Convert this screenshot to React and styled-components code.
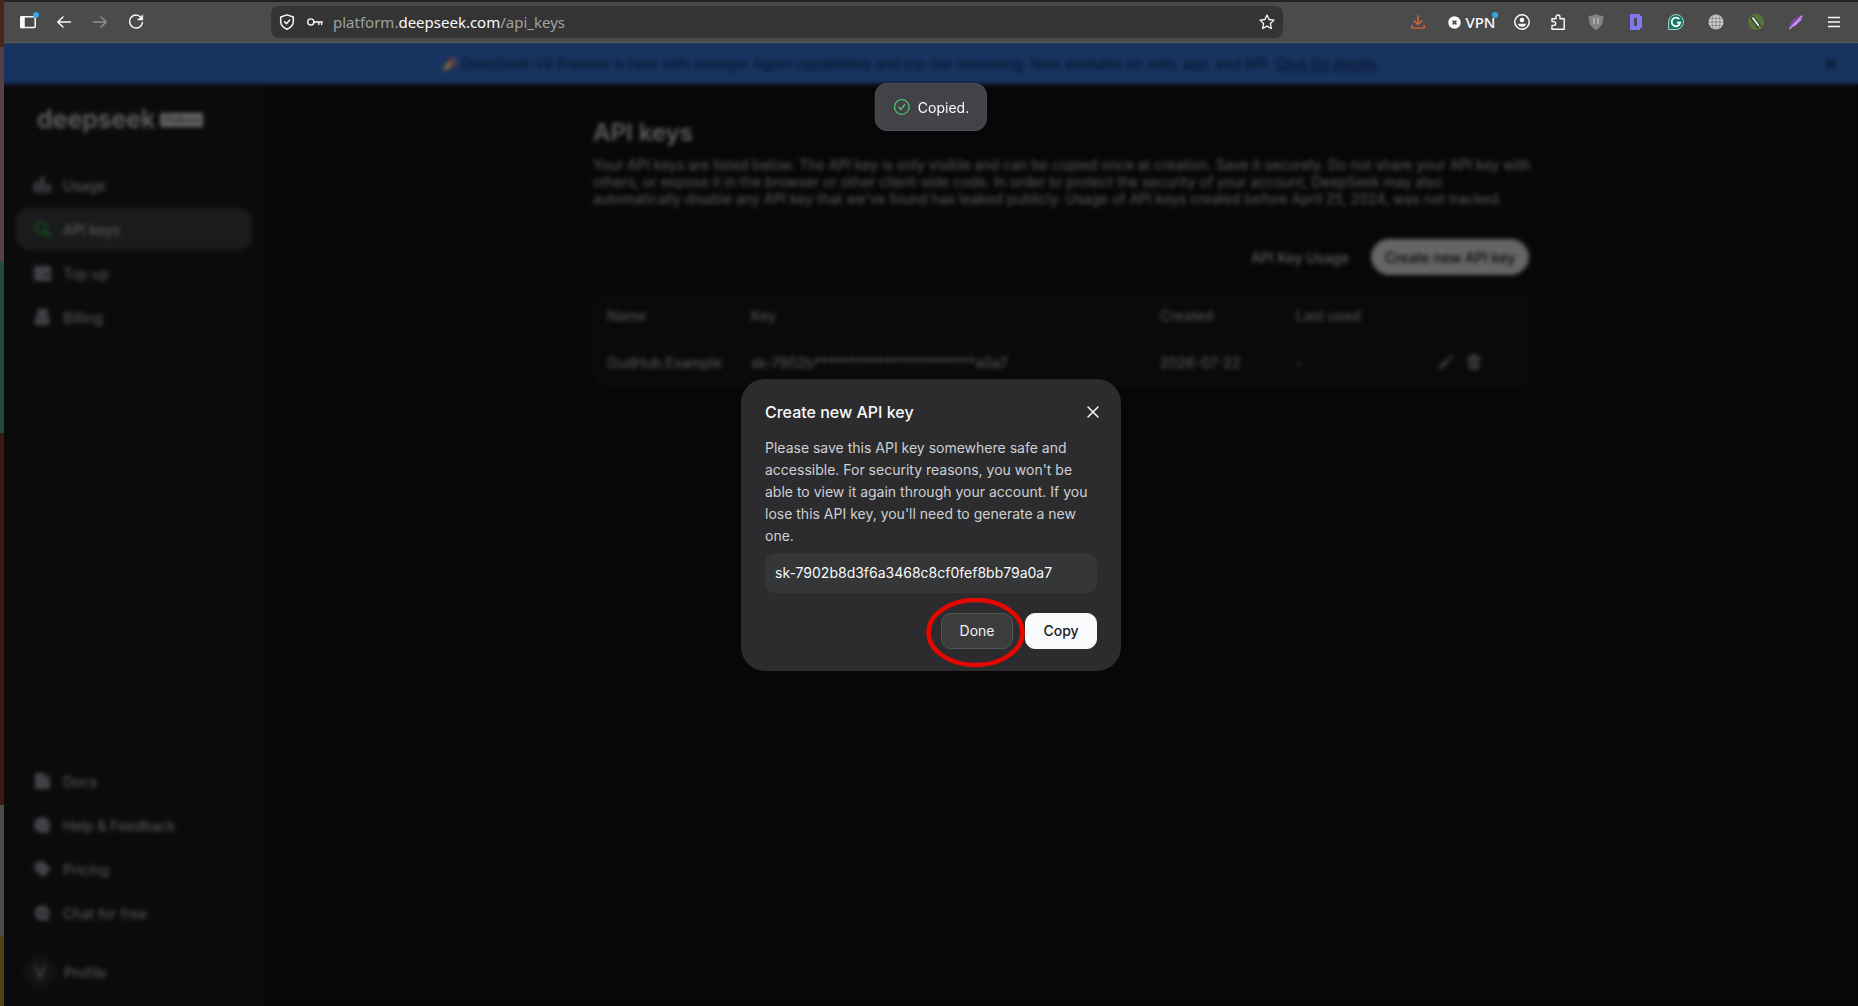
import React from "react";
import styled, { createGlobalStyle } from "styled-components";

const GlobalStyle = createGlobalStyle`
  * {
    box-sizing: border-box;
  }
  body {
    margin: 0;
    background: #070709;
    font-family: Inter, "Liberation Sans", sans-serif;
    font-size: 14px;
  }
  button {
    font: inherit;
    border: none;
    padding: 0;
    cursor: pointer;
  }
  a {
    color: inherit;
    text-decoration: none;
  }
`;

const Desktop = styled.div`
  min-height: 100vh;
  display: flex;
  padding-left: 4px;
  background: linear-gradient(
    #4c2418 0 47px,
    #573f45 47px 26%,
    #244a46 26% 43%,
    #3a1816 43% 80%,
    #4c4b44 80% 93%,
    #534012 93%
  );
`;

const Window = styled.div`
  flex: 1;
  display: flex;
  flex-direction: column;
`;

/* browser toolbar */

const Toolbar = styled.header`
  height: 43px;
  display: flex;
  align-items: center;
  padding: 0 6px;
  background: #4b4b4b;
  border-top: 2px solid #232323;
  border-bottom: 1px solid #5a5a58;
  font-family: "Noto Sans", sans-serif;
`;

const ToolButton = styled.button`
  position: relative;
  width: ${props => (props.$wide ? "40px" : "36px")};
  height: 36px;
  display: flex;
  align-items: center;
  justify-content: center;
  background: none;
  color: ${props => props.$color || "#fbfbfe"};
`;

const VpnButton = styled(ToolButton)`
  width: 64px;
  gap: 4px;
  margin-left: 4px;
  font-size: 15px;
  font-weight: 500;
`;

const Dot = styled.span`
  position: absolute;
  top: 8px;
  right: ${props => props.$right || "7px"};
  width: 6px;
  height: 6px;
  border-radius: 50%;
  background: #35a7e8;
`;

const AddressBar = styled.div`
  flex: 1;
  height: 32px;
  margin: 0 117px;
  display: flex;
  align-items: center;
  padding: 0 8px;
  border-radius: 8px;
  background: #343434;
  color: #fbfbfe;
`;

const Address = styled.span`
  flex: 1;
  margin-left: 10px;
  font-size: 15px;
  color: #a0a0a2;

  b {
    font-weight: 400;
    color: #fbfbfe;
  }
`;

const KeySlot = styled.span`
  display: flex;
  margin-left: 12px;
`;

/* page */

const Viewport = styled.div`
  position: relative;
  flex: 1;
  display: flex;
  flex-direction: column;
  background: #070709;
`;

const Banner = styled.div`
  height: 41px;
  display: flex;
  align-items: center;
  padding-right: 15px;
  background: #17335f;
  color: #07122a;
`;

const BannerText = styled.p`
  flex: 1;
  margin: 0;
  display: flex;
  align-items: center;
  justify-content: center;
  gap: 4px;

  a {
    text-decoration: underline;
  }
`;

const BannerClose = styled.button`
  display: flex;
  padding: 2px;
  background: none;
  color: #02050c;
`;

const Body = styled.div`
  flex: 1;
  display: flex;
`;

const Sidebar = styled.nav`
  width: 260px;
  display: flex;
  flex-direction: column;
  padding: 20px 12px 18px;
  background: #0b0b0b;
`;

const Logo = styled.div`
  display: flex;
  align-items: center;
  gap: 5px;
  height: 30px;
  padding-left: 21px;
  margin-bottom: 30px;
  font-size: 25px;
  font-weight: 600;
  color: #606060;
`;

const LogoTag = styled.span`
  margin-top: 1px;
  padding: 0 3px;
  border-radius: 2px;
  background: #666666;
  color: #2a2a2a;
  font-size: 9px;
  line-height: 14px;
  font-weight: 600;
`;

const NavItem = styled.a`
  height: 42px;
  margin-bottom: 2px;
  display: flex;
  align-items: center;
  gap: 12px;
  padding-left: 17px;
  border-radius: 14px;
  background: ${props => (props.$active ? "#1a1b1c" : "none")};
  color: #5c5c5c;

  svg {
    color: ${props => (props.$active ? "#15521f" : "#424348")};
  }
`;

const Spacer = styled.div`
  flex: 1;
`;

const Profile = styled.a`
  display: flex;
  align-items: center;
  gap: 8px;
  margin-top: 20px;
  padding-left: 8px;
  color: #5c5c5c;
`;

const Avatar = styled.span`
  width: 32px;
  height: 32px;
  display: flex;
  align-items: center;
  justify-content: center;
  border-radius: 50%;
  background: #141415;
  font-size: 16px;
`;

const Main = styled.main`
  flex: 1;
  padding: 33px 24px;
`;

const Content = styled.div`
  max-width: 936px;
  margin: 0 auto;
`;

const Heading = styled.h1`
  margin: 0 0 7px;
  font-size: 24px;
  line-height: 32px;
  font-weight: 600;
  color: #5e5e5e;
`;

const Intro = styled.p`
  margin: 0 -4px 0 0;
  line-height: 17px;
  color: #585858;
`;

const Actions = styled.div`
  display: flex;
  justify-content: flex-end;
  gap: 8px;
  margin: 32px 0 15px;
`;

const PillButton = styled.button`
  height: 36px;
  padding: 0 13px;
  border-radius: 18px;
  border: 1px solid ${props => (props.$primary ? "#656565" : "#101012")};
  background: ${props => (props.$primary ? "#656565" : "none")};
  color: ${props => (props.$primary ? "#0a0a0c" : "#5a5a5a")};
  font-weight: 500;
`;

const TableCard = styled.div`
  padding: 2px 14px 0;
  border-radius: 14px;
  background: #0a0a0a;
`;

const Table = styled.table`
  width: 100%;
  table-layout: fixed;
  border-collapse: collapse;
  color: #5a5a5a;

  th,
  td {
    height: 48px;
    padding: 0;
    text-align: left;
  }
  th {
    font-weight: 500;
    color: #4a4a4c;
    border-bottom: 1px solid #0e0e0e;
  }
  td {
    padding-bottom: 4px;
  }
`;

const RowActions = styled.div`
  display: flex;
  gap: 12px;

  button {
    display: flex;
    background: none;
    color: #4a4a4c;
  }
`;

/* dialog */

const Overlay = styled.div`
  position: absolute;
  inset: 0;
  display: grid;
  place-items: center;
  backdrop-filter: blur(2px);
`;

const Dialog = styled.section`
  width: 380px;
  padding: 21px 24px 22px;
  border-radius: 24px;
  background: #2c2c2e;
  color: #f9fafb;
`;

const DialogHeader = styled.div`
  display: flex;
  align-items: center;
  justify-content: space-between;
  margin-bottom: 13px;
`;

const DialogTitle = styled.h2`
  margin: 0;
  font-size: 16px;
  line-height: 24px;
  font-weight: 500;
`;

const CloseButton = styled.button`
  display: flex;
  margin-right: -6px;
  background: none;
  color: #f9fafb;
`;

const DialogText = styled.p`
  margin: 0 0 6px;
  line-height: 22px;
  color: #cdd0d4;
`;

const KeyInput = styled.input`
  display: block;
  width: 100%;
  height: 40px;
  padding: 0 10px;
  border: none;
  border-radius: 10px;
  outline: none;
  background: #353638;
  color: #f9fafb;
  font: inherit;
`;

const DialogFooter = styled.div`
  display: flex;
  justify-content: flex-end;
  gap: 12px;
  margin-top: 20px;
`;

const DialogButton = styled.button`
  width: 72px;
  height: 36px;
  border-radius: 10px;
  border: 1px solid ${props => (props.$primary ? "#f9fafb" : "#535456")};
  background: ${props => (props.$primary ? "#f9fafb" : "#3c3c3e")};
  color: ${props => (props.$primary ? "#17181a" : "#f0f1f2")};
  font-weight: ${props => (props.$primary ? 500 : 400)};
`;

const Marked = styled.div`
  position: relative;

  > svg {
    position: absolute;
    left: -15px;
    top: -15px;
    pointer-events: none;
    z-index: 1;
  }
`;

const Toast = styled.div`
  position: absolute;
  top: 40px;
  left: 50%;
  transform: translateX(-50%);
  height: 48px;
  display: flex;
  align-items: center;
  gap: 7px;
  padding: 0 17px;
  border: 1px solid #505055;
  border-radius: 12px;
  background: #434347;
  color: #f9fafb;
`;

const Icon = ({ size = 18, box = 18, children, ...rest }) => (
  <svg
    width={size}
    height={size}
    viewBox={`0 0 ${box} ${box}`}
    fill="none"
    stroke="currentColor"
    strokeWidth="1.5"
    strokeLinecap="round"
    strokeLinejoin="round"
    aria-hidden="true"
    {...rest}
  >
    {children}
  </svg>
);

const icons = {
  panel: (
    <Icon>
      <rect x="1.8" y="3.8" width="14.4" height="10.8" rx="1" />
      <path d="M2 4h3v10.500H2z" fill="currentColor" />
    </Icon>
  ),
  back: (
    <Icon>
      <path d="M15.500 9H3M8 4 2.800 9 8 14" />
    </Icon>
  ),
  forward: (
    <Icon>
      <path d="M2.500 9H15M10 4l5.200 5-5.200 5" />
    </Icon>
  ),
  reload: (
    <Icon>
      <path d="M14.800 5.500A6.500 6.500 0 1 0 15.500 9.500" />
      <path d="M15.800 2v5h-5z" fill="currentColor" strokeWidth="0.500" />
    </Icon>
  ),
  shield: (
    <Icon size={16} box={16}>
      <path d="M8 .9 14.300 3v4.500c0 3.500-2.600 6.200-6.300 7.700C4.300 13.700 1.700 11 1.700 7.500V3z" />
      <path d="m5.500 7.800 1.900 1.900 3.300-3.600" />
    </Icon>
  ),
  key: (
    <Icon size={16} box={16} strokeWidth="1.400">
      <circle cx="3.800" cy="8" r="3.100" />
      <path d="M7 8h8.200M11.800 8v2.500M14.600 8v2.500" />
    </Icon>
  ),
  star: (
    <Icon size={16} box={16} strokeWidth="1.300">
      <path d="m8 1 2.100 4.500 4.900.6-3.600 3.400.9 5L8 12.100l-4.300 2.400.9-5L1 6.100l4.900-.6z" />
    </Icon>
  ),
  download: (
    <Icon size={14} box={14} strokeWidth="1.400">
      <path d="M7 .8v8.500M3 5.800l4 3.800 4-3.800M.8 10.500v2.600h12.400v-2.600" />
    </Icon>
  ),
  vpn: (
    <svg width="13" height="13" viewBox="0 0 13 13" aria-hidden="true">
      <circle cx="6.500" cy="6.500" r="6.200" fill="#fbfbfe" />
      <path d="m4.600 4.600 3.800 3.800m0-3.800L4.600 8.400" stroke="#4b4b4b" strokeWidth="1.600" />
    </svg>
  ),
  account: (
    <Icon size={16} box={16}>
      <circle cx="8" cy="8" r="7.200" />
      <circle cx="8" cy="6" r="2.300" fill="currentColor" stroke="none" />
      <path d="M3.800 9.800h8.400c-.5 1.900-2.100 3-4.200 3s-3.700-1.100-4.200-3z" fill="currentColor" stroke="none" />
    </Icon>
  ),
  puzzle: (
    <Icon size={16} box={16} strokeWidth="1.400">
      <path d="M2 15.200V11.400h1.800a1.900 1.900 0 0 0 0-3.800H2V4.800h4V3a2 2 0 0 1 4 0v1.800h4.200v10.400z" />
    </Icon>
  ),
  blocker: (
    <svg width="16" height="16" viewBox="0 0 16 16" aria-hidden="true">
      <path d="M8 0c2 1.300 4.500 2 7.500 2 0 6.500-1.500 10.500-7.500 14C2 12.500.5 8.500.5 2 3.500 2 6 1.300 8 0z" fill="#838383" />
      <path d="M6 4v6M10 4v6" stroke="#b5b5b5" strokeWidth="1.600" />
    </svg>
  ),
  dMark: (
    <svg width="14" height="16" viewBox="0 0 14 16" aria-hidden="true">
      <path
        d="M1 0h10v2h2v12h-2v2H1zM5 4v8h3V4z"
        fill="#8077f3"
        fillRule="evenodd"
      />
    </svg>
  ),
  gMark: (
    <svg width="16" height="16" viewBox="0 0 16 16" fill="none" aria-hidden="true">
      <path d="M.5 15.500V8A7.500 7.500 0 1 1 8 15.500z" fill="#147a68" stroke="#a5cfc6" />
      <path d="M11.300 5.200A4.300 4.300 0 1 0 12.200 8.700H9" stroke="#fff" strokeWidth="1.800" />
    </svg>
  ),
  globe: (
    <svg width="16" height="16" viewBox="0 0 16 16" fill="none" aria-hidden="true">
      <circle cx="8" cy="8" r="7.500" fill="#d0d0d0" />
      <path
        d="M8 .5v15M.5 8h15M2 4.500h12M2 11.500h12M5.500 1C3.500 5 3.500 11 5.500 15M10.500 1c2 4 2 10 0 14"
        stroke="#858585"
        strokeWidth="0.900"
      />
    </svg>
  ),
  leaf: (
    <svg width="16" height="16" viewBox="0 0 16 16" fill="none" aria-hidden="true">
      <circle cx="8" cy="8" r="8" fill="#56753a" />
      <path d="m4 3 7.500 10" stroke="#26301d" strokeWidth="4" />
      <path d="m4.500 3.500 6 8" stroke="#eef0e8" strokeWidth="2" />
      <path d="m10 11 2 2.500" stroke="#eef0e8" strokeWidth="1" />
    </svg>
  ),
  feather: (
    <svg width="16" height="16" viewBox="0 0 16 16" fill="none" aria-hidden="true">
      <path d="M15 .5C9 2.300 2.500 6.500 2.200 11L1 15.500l3-2C9.500 12 14.500 7.500 15 .5z" fill="#7d49a8" />
      <path d="M14 2 1.500 15M13.300 5C11 7.500 8 10 5 12" stroke="#d3a3ee" strokeWidth="1.100" />
    </svg>
  ),
  menu: (
    <Icon size={14} box={14} strokeLinecap="butt">
      <path d="M1 2.500h12M1 7h12M1 11.500h12" />
    </Icon>
  ),
  party: (
    <svg width="16" height="16" viewBox="0 0 16 16" fill="none" aria-hidden="true">
      <path d="m1 15 4-9 4.500 5z" fill="#a3762b" />
      <path d="M6 6c3-1 1-3 4-4.500M10 10c2-2.500 3-.5 5-2" stroke="#8a3434" strokeWidth="1.800" />
      <path d="m8 8 5.500-5.500" stroke="#a85a2c" strokeWidth="2" />
    </svg>
  ),
  cross: (
    <Icon size={20} box={20}>
      <path d="m5 5 10 10M15 5 5 15" />
    </Icon>
  ),
  usage: (
    <Icon stroke="none" fill="currentColor">
      <path d="M1 6h4v11H1zM7 1h4.500v16H7zM13.500 8h4v9h-4z" />
    </Icon>
  ),
  apiKeys: (
    <Icon strokeWidth="2">
      <circle cx="8" cy="7.500" r="5.500" />
      <path d="m11.500 11.500 5 4.500M13 14l2-2" />
    </Icon>
  ),
  topUp: (
    <Icon stroke="none" fill="currentColor">
      <path d="M1 2h17v15H1zM10 9.500v2h5v-2z" fillRule="evenodd" />
    </Icon>
  ),
  billing: (
    <Icon stroke="none" fill="currentColor">
      <path d="M4 1h11v8H4zM1.500 9.500h15V17h-15z" />
    </Icon>
  ),
  docs: (
    <Icon stroke="none" fill="currentColor">
      <path d="M2 1h9v5h6v11H2zM12 1l5 4.500h-5z" />
    </Icon>
  ),
  help: (
    <Icon stroke="none" fill="currentColor">
      <path d="M9 1a8 8 0 0 1 6.500 12.800L17 17H9A8 8 0 0 1 9 1z" />
    </Icon>
  ),
  pricing: (
    <Icon stroke="none" fill="currentColor">
      <path d="M2 2.500 10 1l8 8-8 8.500L1 9.500z" />
    </Icon>
  ),
  chat: (
    <Icon stroke="none" fill="currentColor">
      <path
        d="M9 1.500a7.500 7.500 0 0 1 6 12l1.500 3H9a7.500 7.500 0 0 1 0-15zM5.500 8.500V10h7V8.500z"
        fillRule="evenodd"
      />
    </Icon>
  ),
  edit: (
    <Icon size={16} box={16} strokeWidth="3" strokeLinecap="butt">
      <path d="m1.500 14.500 8.500-8.500M11.500 4.500l2.500-2.500" />
    </Icon>
  ),
  trash: (
    <Icon size={16} box={16} strokeWidth="1.800">
      <path d="M2 4h12M5.500 3.500V2h5v1.500M3.500 4.500l.7 10h7.600l.7-10M6.500 7v5M9.500 7v5" />
    </Icon>
  ),
  check: (
    <Icon size={18} box={18} stroke="#4fbf73" strokeWidth="1.300">
      <circle cx="9" cy="9" r="7.300" />
      <path d="m6 9.300 2.200 2.200L12 6.500" />
    </Icon>
  )
};

const topLinks = [
  { label: "Usage", icon: "usage" },
  { label: "API keys", icon: "apiKeys", active: true },
  { label: "Top up", icon: "topUp" },
  { label: "Billing", icon: "billing" }
];

const bottomLinks = [
  { label: "Docs", icon: "docs" },
  { label: "Help & Feedback", icon: "help" },
  { label: "Pricing", icon: "pricing" },
  { label: "Chat for free", icon: "chat" }
];

const extensions = ["blocker", "dMark", "gMark", "globe", "leaf", "feather"];

const NavLinks = ({ links }) =>
  links.map(({ label, icon, active }) => (
    <NavItem key={label} href="#" $active={active}>
      {icons[icon]}
      {label}
    </NavItem>
  ));

const BrowserToolbar = () => (
  <Toolbar>
    <ToolButton aria-label="Sidebar">
      {icons.panel}
      <Dot />
    </ToolButton>
    <ToolButton aria-label="Back">{icons.back}</ToolButton>
    <ToolButton aria-label="Forward" $color="#8f8f90">
      {icons.forward}
    </ToolButton>
    <ToolButton aria-label="Reload">{icons.reload}</ToolButton>
    <AddressBar>
      {icons.shield}
      <KeySlot>{icons.key}</KeySlot>
      <Address>
        platform.<b>deepseek.com</b>/api_keys
      </Address>
      {icons.star}
    </AddressBar>
    <ToolButton aria-label="Downloads" $color="#d9663a">
      {icons.download}
    </ToolButton>
    <VpnButton>
      {icons.vpn}
      VPN
      <Dot $right="6px" />
    </VpnButton>
    <ToolButton aria-label="Account">{icons.account}</ToolButton>
    <ToolButton aria-label="Extensions">{icons.puzzle}</ToolButton>
    {extensions.map(name => (
      <ToolButton key={name} aria-label={name} $wide>
        {icons[name]}
      </ToolButton>
    ))}
    <ToolButton aria-label="Menu">{icons.menu}</ToolButton>
  </Toolbar>
);

const KeysTable = () => (
  <TableCard>
    <Table>
      <colgroup>
        <col width="144" />
        <col />
        <col width="136" />
        <col width="142" />
        <col width="77" />
      </colgroup>
      <thead>
        <tr>
          <th>Name</th>
          <th>Key</th>
          <th>Created</th>
          <th>Last used</th>
          <th />
        </tr>
      </thead>
      <tbody>
        <tr>
          <td>GudHub.Example</td>
          <td>sk-7902b***********************a0a7</td>
          <td>2026-07-22</td>
          <td>-</td>
          <td>
            <RowActions>
              <button aria-label="Edit">{icons.edit}</button>
              <button aria-label="Delete">{icons.trash}</button>
            </RowActions>
          </td>
        </tr>
      </tbody>
    </Table>
  </TableCard>
);

const KeyDialog = () => (
  <Dialog role="dialog" aria-labelledby="dialog-title">
    <DialogHeader>
      <DialogTitle id="dialog-title">Create new API key</DialogTitle>
      <CloseButton aria-label="Close">{icons.cross}</CloseButton>
    </DialogHeader>
    <DialogText>
      Please save this API key somewhere safe and accessible. For security
      reasons, you won't be able to view it again through your account. If you
      lose this API key, you'll need to generate a new one.
    </DialogText>
    <KeyInput
      aria-label="API key"
      readOnly
      value="sk-7902b8d3f6a3468c8cf0fef8bb79a0a7"
    />
    <DialogFooter>
      <Marked>
        <DialogButton>Done</DialogButton>
        <svg width="100" height="70" fill="none" aria-hidden="true">
          <ellipse cx="49.500" cy="34.500" rx="47" ry="32.500" stroke="#e60800" strokeWidth="4.500" />
        </svg>
      </Marked>
      <DialogButton $primary>Copy</DialogButton>
    </DialogFooter>
  </Dialog>
);

export default () => {
  return (
    <Desktop>
      <GlobalStyle />
      <Window>
        <BrowserToolbar />
        <Viewport>
          <Banner>
            <BannerText>
              {icons.party}
              <span>
                DeepSeek-V4 Preview is here with stronger Agent capabilities and
                top-tier reasoning. Now available on web, app, and API.{" "}
                <a href="#">Click for details</a>.
              </span>
            </BannerText>
            <BannerClose aria-label="Dismiss">{icons.cross}</BannerClose>
          </Banner>
          <Body>
            <Sidebar>
              <Logo>
                deepseek
                <LogoTag>Platform</LogoTag>
              </Logo>
              <NavLinks links={topLinks} />
              <Spacer />
              <NavLinks links={bottomLinks} />
              <Profile href="#">
                <Avatar>V</Avatar>
                Profile
              </Profile>
            </Sidebar>
            <Main>
              <Content>
                <Heading>API keys</Heading>
                <Intro>
                  Your API keys are listed below. The API key is only visible
                  and can be copied once at creation. Save it securely. Do not
                  share your API key with others, or expose it in the browser or
                  other client-side code. In order to protect the security of
                  your account, DeepSeek may also automatically disable any API
                  key that we've found has leaked publicly. Usage of API keys
                  created before April 25, 2024, was not tracked.
                </Intro>
                <Actions>
                  <PillButton>API Key Usage</PillButton>
                  <PillButton $primary>Create new API key</PillButton>
                </Actions>
                <KeysTable />
              </Content>
            </Main>
          </Body>
          <Overlay>
            <KeyDialog />
            <Toast role="status">
              {icons.check}
              Copied.
            </Toast>
          </Overlay>
        </Viewport>
      </Window>
    </Desktop>
  );
};
